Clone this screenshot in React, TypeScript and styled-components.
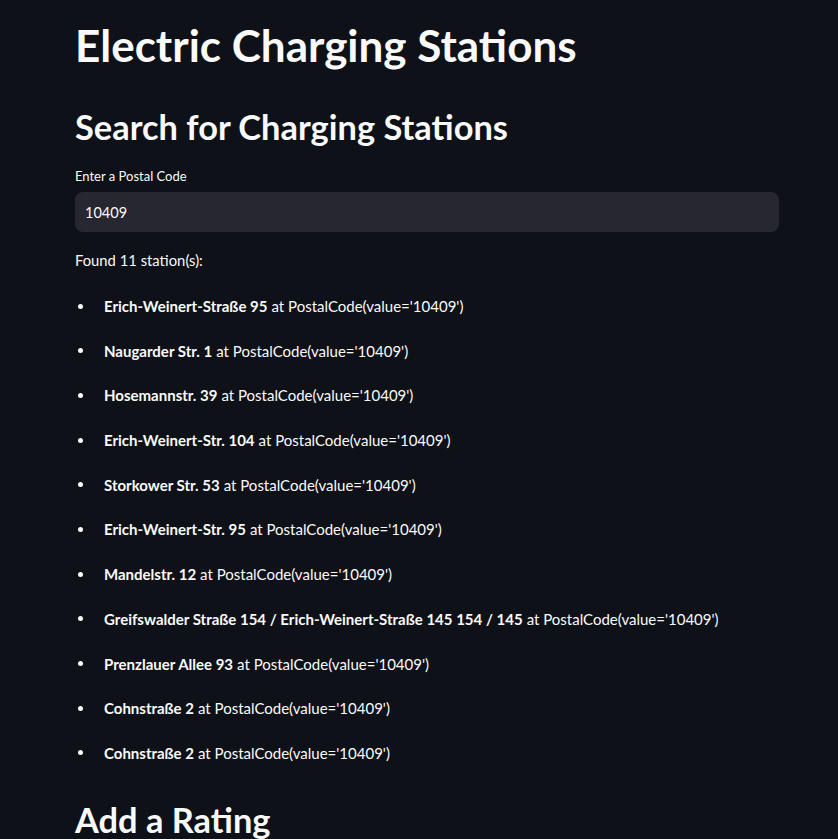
import React from "react";
import styled, { createGlobalStyle } from "styled-components";

const Global = createGlobalStyle`
  html, body { margin: 0; padding: 0; background: #0e1117; }
  body { font-family: "Lato", "Noto Sans", sans-serif; color: #fafafa; overflow: hidden; }
`;

const Main = styled.main`
  width: 704px;
  padding: 19px 0 0 75px;
  display: flex;
  flex-direction: column;
`;

const Title = styled.h1`
  margin: 0;
  font-size: 44px;
  line-height: 53px;
  font-weight: 700;
`;

const Subtitle = styled.h2<{ $top: number }>`
  margin: ${(p) => p.$top}px 0 0;
  font-size: 34.4px;
  line-height: 43px;
  font-weight: 700;
`;

const Label = styled.label`
  margin-top: 17px;
  font-size: 13px;
  line-height: 22px;
`;

const Input = styled.input`
  margin-top: 5px;
  height: 40px;
  box-sizing: border-box;
  width: 704px;
  background: #262730;
  border: none;
  border-radius: 8px;
  color: #fafafa;
  font-family: inherit;
  font-size: 14.5px;
  padding: 0 10px;
  outline: none;
`;

const Found = styled.p`
  margin: 15px 0 0;
  font-size: 14.8px;
  line-height: 26px;
`;

const List = styled.ul`
  margin: 20px 0 0;
  padding: 0;
  list-style: none;
  display: flex;
  flex-direction: column;
  gap: 18.7px;
`;

const Item = styled.li`
  display: flex;
  align-items: center;
  font-size: 15px;
  line-height: 26px;
  &::before {
    content: "";
    width: 5px;
    height: 5px;
    border-radius: 50%;
    background: #fafafa;
    margin: 0 21px 0 3px;
    flex: none;
  }
  b { font-weight: 700; margin-right: 4px; }
`;

const stations = [
  "Erich-Weinert-Straße 95",
  "Naugarder Str. 1",
  "Hosemannstr. 39",
  "Erich-Weinert-Str. 104",
  "Storkower Str. 53",
  "Erich-Weinert-Str. 95",
  "Mandelstr. 12",
  "Greifswalder Straße 154 / Erich-Weinert-Straße 145 154 / 145",
  "Prenzlauer Allee 93",
  "Cohnstraße 2",
  "Cohnstraße 2",
];

export default function App() {
  return (
    <>
      <Global />
      <Main>
        <Title>Electric Charging Stations</Title>
        <Subtitle $top={33}>Search for Charging Stations</Subtitle>
        <Label>Enter a Postal Code</Label>
        <Input defaultValue="10409" />
        <Found>Found 11 station(s):</Found>
        <List>
          {stations.map((s, i) => (
            <Item key={i}>
              <b>{s}</b>at PostalCode(value='10409')
            </Item>
          ))}
        </List>
        <Subtitle $top={32}>Add a Rating</Subtitle>
      </Main>
    </>
  );
}
